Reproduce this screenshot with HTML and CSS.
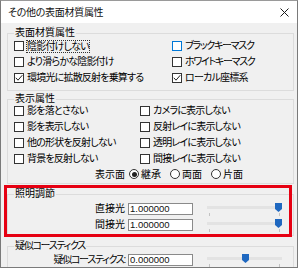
FILE: index.html
```html
<!DOCTYPE html>
<html lang="ja">
<head>
<meta charset="utf-8">
<title>その他の表面材質属性</title>
<link rel="stylesheet" href="styles.css">
</head>
<body>
<div class="window">
  <div class="titlebar">
    <span class="title">その他の表面材質属性</span>
    <svg class="close" width="9" height="9" viewBox="0 0 9 9"><path d="M0.5 0.5L8.5 8.5M8.5 0.5L0.5 8.5" stroke="#1a1a1a" stroke-width="1" fill="none"/></svg>
  </div>
  <div class="content">
    <fieldset class="group g1">
      <legend>表面材質属性</legend>
      <div class="grid cols-a">
        <div class="cb-row"><span class="cb"></span><span class="focus">陰影付けしない</span></div>
        <div class="cb-row kt"><span class="cb hover"></span><span>ブラックキーマスク</span></div>
        <div class="cb-row"><span class="cb"></span><span>より滑らかな陰影付け</span></div>
        <div class="cb-row kt"><span class="cb"></span><span>ホワイトキーマスク</span></div>
        <div class="cb-row"><span class="cb"><svg width="8" height="8" viewBox="0 0 8 8"><path d="M0.8 3.8L3 6.2L7.3 1.2" stroke="#222" stroke-width="1" fill="none"/></svg></span><span>環境光に拡散反射を乗算する</span></div>
        <div class="cb-row"><span class="cb"><svg width="8" height="8" viewBox="0 0 8 8"><path d="M0.8 3.8L3 6.2L7.3 1.2" stroke="#222" stroke-width="1" fill="none"/></svg></span><span>ローカル座標系</span></div>
      </div>
    </fieldset>
    <fieldset class="group g2">
      <legend>表示属性</legend>
      <div class="grid cols-b">
        <div class="cb-row"><span class="cb"></span><span>影を落とさない</span></div>
        <div class="cb-row"><span class="cb"></span><span>カメラに表示しない</span></div>
        <div class="cb-row"><span class="cb"></span><span>影を表示しない</span></div>
        <div class="cb-row"><span class="cb"></span><span>反射レイに表示しない</span></div>
        <div class="cb-row"><span class="cb"></span><span>他の形状を反射しない</span></div>
        <div class="cb-row"><span class="cb"></span><span>透明レイに表示しない</span></div>
        <div class="cb-row"><span class="cb"></span><span>背景を反射しない</span></div>
        <div class="cb-row"><span class="cb"></span><span>間接レイに表示しない</span></div>
        <div class="radio-row">
          <span>表示面</span>
          <span class="opt first"><span class="rb on"></span>継承</span>
          <span class="opt"><span class="rb"></span>両面</span>
          <span class="opt"><span class="rb"></span>片面</span>
        </div>
      </div>
    </fieldset>
    <fieldset class="group g3">
      <legend>照明調節</legend>
      <div class="vals">
        <div class="vrow">
          <span class="vlabel">直接光</span>
          <span class="vinput">1.000000</span>
          <div class="slider">
            <span class="track"></span><span class="tick t0"></span><span class="tick t1"></span>
            <svg class="thumb" style="left:70px" width="7" height="9" viewBox="0 0 7 9"><path d="M0 0H7V6L3.5 9L0 6Z" fill="#1f68c0"/></svg>
          </div>
        </div>
        <div class="vrow">
          <span class="vlabel">間接光</span>
          <span class="vinput">1.000000</span>
          <div class="slider">
            <span class="track"></span><span class="tick t0"></span><span class="tick t1"></span>
            <svg class="thumb" style="left:70px" width="7" height="9" viewBox="0 0 7 9"><path d="M0 0H7V6L3.5 9L0 6Z" fill="#1f68c0"/></svg>
          </div>
        </div>
      </div>
    </fieldset>
    <fieldset class="group g4">
      <legend class="kt">疑似コースティクス</legend>
      <div class="vals">
        <div class="vrow">
          <span class="vlabel kt">疑似コースティクス:</span>
          <span class="vinput">0.000000</span>
          <div class="slider">
            <span class="track"></span><span class="tick t0"></span><span class="tick t1"></span>
            <svg class="thumb" style="left:37px" width="7" height="9" viewBox="0 0 7 9"><path d="M0 0H7V6L3.5 9L0 6Z" fill="#1f68c0"/></svg>
          </div>
        </div>
      </div>
    </fieldset>
  </div>
  <div class="annot"></div>
</div>
</body>
</html>
```

FILE: styles.css
```css
* { box-sizing: border-box; }
html, body { margin: 0; padding: 0; background: #fff; }
body {
  font-family: "Liberation Sans", "Noto Sans CJK JP", sans-serif;
  font-size: 10px;
  color: #000;
  font-feature-settings: "palt";
}
.window {
  position: relative;
  width: 298px;
  height: 268px;
  border: 1px solid #7a7a7a;
  border-top-color: #9a9a9a;
  background: #f0f0f0;
  overflow: hidden;
}
.titlebar {
  height: 22px;
  background: #fff;
  display: flex;
  align-items: center;
  padding: 1px 7px 0 7px;
}
.title { line-height: 12px; color: #111; letter-spacing: -0.3px; }
.close { margin-left: auto; margin-right: 1px; margin-top: -1px; }
.content {
  display: flex;
  flex-direction: column;
  padding: 4px 3px 0 6px;
}
.group {
  margin: 0;
  padding: 0;
  min-width: 0;
  border: 1px solid #dcdcdc;
}
.group legend {
  padding: 0 1px;
  margin-left: 6px;
  line-height: 12px;
}
.g2 { margin-top: 2px; }
.g3 { margin-top: 4px; }
.g4 { margin-top: 4px; }
.grid {
  display: grid;
  grid-auto-rows: 16px;
  padding: 0 0 4px 6px;
}
.cols-a { grid-template-columns: 158px 1fr; margin-top: -1px; }
.cols-b { grid-template-columns: 126px 1fr; margin-top: -2px; padding-bottom: 0; }
.cb-row {
  display: flex;
  align-items: center;
  gap: 3px;
  white-space: nowrap;
  line-height: 12px;
  letter-spacing: -0.8px;
}
.group .kt, .cb-row.kt, .vlabel.kt { letter-spacing: -1.3px; }
.cb {
  flex: none;
  width: 10px;
  height: 10px;
  margin-top: -1px;
  border: 1px solid #333;
  background: #fff;
  display: flex;
  align-items: center;
  justify-content: center;
}
.cb.hover { border-color: #0078d7; }
.focus { outline: 1px dotted #333; line-height: 11px; }
.radio-row {
  grid-column: 1 / -1;
  height: 15px;
  display: flex;
  align-items: center;
  padding-left: 81px;
  white-space: nowrap;
  line-height: 12px;
}
.opt { display: flex; align-items: center; gap: 2px; margin-left: 9px; }
.opt.first { margin-left: 4px; }
.rb {
  flex: none;
  width: 10px;
  height: 10px;
  margin-top: -1px;
  border: 1px solid #333;
  border-radius: 50%;
  background: #fff;
  display: flex;
  align-items: center;
  justify-content: center;
}
.rb.on::after {
  content: "";
  width: 5px;
  height: 5px;
  border-radius: 50%;
  background: #222;
}
.vals { display: flex; flex-direction: column; }
.g3 .vals { padding: 1px 0 2px 0; }
.vrow {
  display: flex;
  align-items: center;
  height: 16px;
  white-space: nowrap;
}
.vlabel { width: 117px; text-align: right; line-height: 12px; }
.vinput {
  margin-left: 3px;
  width: 65px;
  height: 12px;
  margin-top: -1px;
  border: 1px solid #8a8a8a;
  background: #fff;
  padding-left: 1px;
  line-height: 10px;
  display: flex;
  align-items: center;
  font-size: 9.5px;
  color: #111;
}
.slider {
  position: relative;
  margin-left: 12px;
  width: 80px;
  height: 16px;
}
.track {
  position: absolute;
  left: 2px;
  top: 5px;
  width: 75px;
  height: 3px;
  background: #e3e3e3;
}
.tick {
  position: absolute;
  top: 12px;
  width: 1px;
  height: 3px;
  background: #c2c2c2;
}
.t0 { left: 4px; }
.t1 { left: 74px; }
.thumb { position: absolute; top: 2px; }
.annot {
  position: absolute;
  left: 3px;
  top: 184px;
  width: 288px;
  height: 52px;
  border: 3px solid #e60012;
}
```
